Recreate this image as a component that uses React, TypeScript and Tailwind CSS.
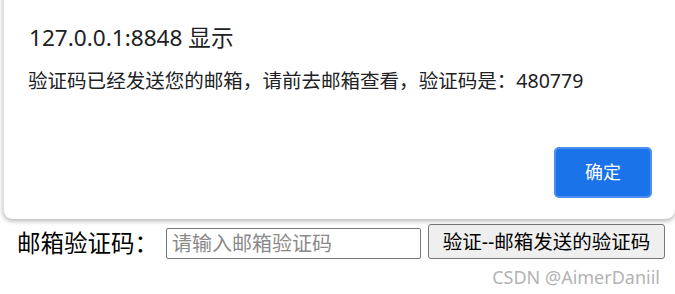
import React from "react";

const sans = { fontFamily: '"Noto Sans", "Noto Sans CJK SC", sans-serif' };

export default function App() {
  return (
    <div
      className="relative w-[675px] h-[294px] overflow-hidden bg-white text-black"
      style={sans}
    >
      <div className="pt-[227px] pl-[17px] flex items-center">
        <span className="text-[23.5px] leading-[31px] text-black">邮箱验证码：</span>
        <input
          className="ml-[8px] w-[255px] h-[31px] border border-[#767676] rounded-[2px] px-[5px] text-[20px] placeholder:text-[#8a8a8a] outline-none"
          placeholder="请输入邮箱验证码"
        />
        <button className="ml-[7px] w-[237px] h-[35px] -mt-[3px] bg-[#efefef] border border-[#767676] rounded-[3px] text-[19.5px] leading-none text-black">
          验证--邮箱发送的验证码
        </button>
      </div>
      <div className="absolute right-[15px] top-[264px] text-[18px] text-[#b3b3b3]">
        CSDN @AimerDaniil
      </div>

      <div className="absolute left-[3px] w-[672px] top-[-40px] h-[259px] bg-white rounded-[9px] shadow-[0_2px_5px_rgba(0,0,0,0.3)] border-l border-[#e0e0e0]">
        <div className="pt-[63px] pl-[25px] text-[22.6px] leading-[30px] text-[#202124]">
          127.0.0.1:8848 显示
        </div>
        <div className="pt-[14px] pl-[24px] text-[19.55px] leading-[28px] text-[#202124]">
          验证码已经发送您的邮箱，请前去邮箱查看，验证码是：480779
        </div>
        <div className="flex justify-end pr-[23px] pt-[52px]">
          <button className="w-[98px] h-[51px] bg-[#1a73e8] border-2 border-[#4d8ff0] rounded-[5px] text-white text-[18px]">
            确定
          </button>
        </div>
      </div>
    </div>
  );
}
